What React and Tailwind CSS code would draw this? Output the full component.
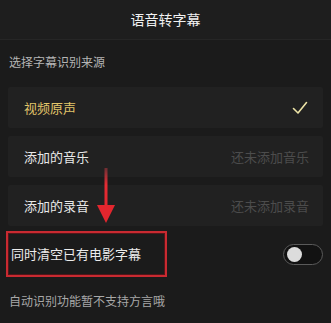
import React from 'react'

const ROWS = [
  { l: '视频原声', active: true },
  { l: '添加的音乐', r: '还未添加音乐' },
  { l: '添加的录音', r: '还未添加录音' },
]

export default function App() {
  return (
    <div className="relative w-[331px] h-[323px] overflow-hidden bg-[#1b1b1b] text-white"
      style={{ fontFamily: '"Noto Sans CJK SC", "Noto Sans", sans-serif' }}>
      {/* Header */}
      <div className="h-[40px] flex items-center justify-center text-[14px] text-[#f2f2f2] bg-[#1e1e1e] border-b border-[#262626]">
        语音转字幕
      </div>

      <div className="h-[47px] pl-[9px] pt-[13px] text-[12px] leading-[18px] text-[#b5b5b5]">选择字幕识别来源</div>

      {/* Source cards */}
      <div className="flex flex-col gap-2 px-2">
        {ROWS.map(r => (
          <div key={r.l} className="h-[41px] flex items-center justify-between pl-4 pr-[14px] bg-[#212121] rounded-[2px]">
            <span className={`text-[13px] ${r.active ? 'text-[#e2c56a]' : 'text-[#e8e8e8]'}`}>{r.l}</span>
            {r.active ? (
              <svg width="16" height="14" viewBox="0 0 16 14" className="mr-[1px]">
                <path d="M1.5 7.5 L6 12 L14.5 1.5" fill="none" stroke="#ece3a6" strokeWidth="1.6" strokeLinecap="round" strokeLinejoin="round" />
              </svg>
            ) : (
              <span className="text-[13px] text-[#4c4c4c]">{r.r}</span>
            )}
          </div>
        ))}
      </div>

      {/* Clear toggle row */}
      <div className="h-[56px] flex items-center justify-between pl-[11px] pr-[8px]">
        <span className="text-[13px] text-[#ececec]">同时清空已有电影字幕</span>
        <div className="w-[40px] h-[21px] rounded-full border border-[#5a5a5a] bg-[#121212] flex items-center pl-[3px]">
          <div className="w-[15px] h-[15px] rounded-full bg-[#dcdcdc]" />
        </div>
      </div>

      <div className="pl-[9px] pt-[10px] text-[12px] leading-[18px] text-[#a8a8a8]">自动识别功能暂不支持方言哦</div>

      {/* Annotation: red arrow */}
      <svg className="absolute left-[96px] top-[168px]" width="20" height="56" viewBox="0 0 20 56">
        <defs>
          <linearGradient id="ar" x1="0" y1="0" x2="0" y2="1">
            <stop offset="0" stopColor="#e0404a" stopOpacity="0.4" />
            <stop offset="0.4" stopColor="#e52b33" />
            <stop offset="1" stopColor="#e3262e" />
          </linearGradient>
        </defs>
        <rect x="8.5" y="0" width="3" height="42" fill="url(#ar)" />
        <path d="M1 37 L19 37 L10 55 Z" fill="#e3262e" />
      </svg>

      {/* Annotation: red box */}
      <div className="absolute left-[6px] top-[231px] w-[161px] h-[46px] border-2 border-[#c92a31] shadow-[inset_0_0_0_1px_rgba(120,20,25,0.6)]" />
    </div>
  )
}
